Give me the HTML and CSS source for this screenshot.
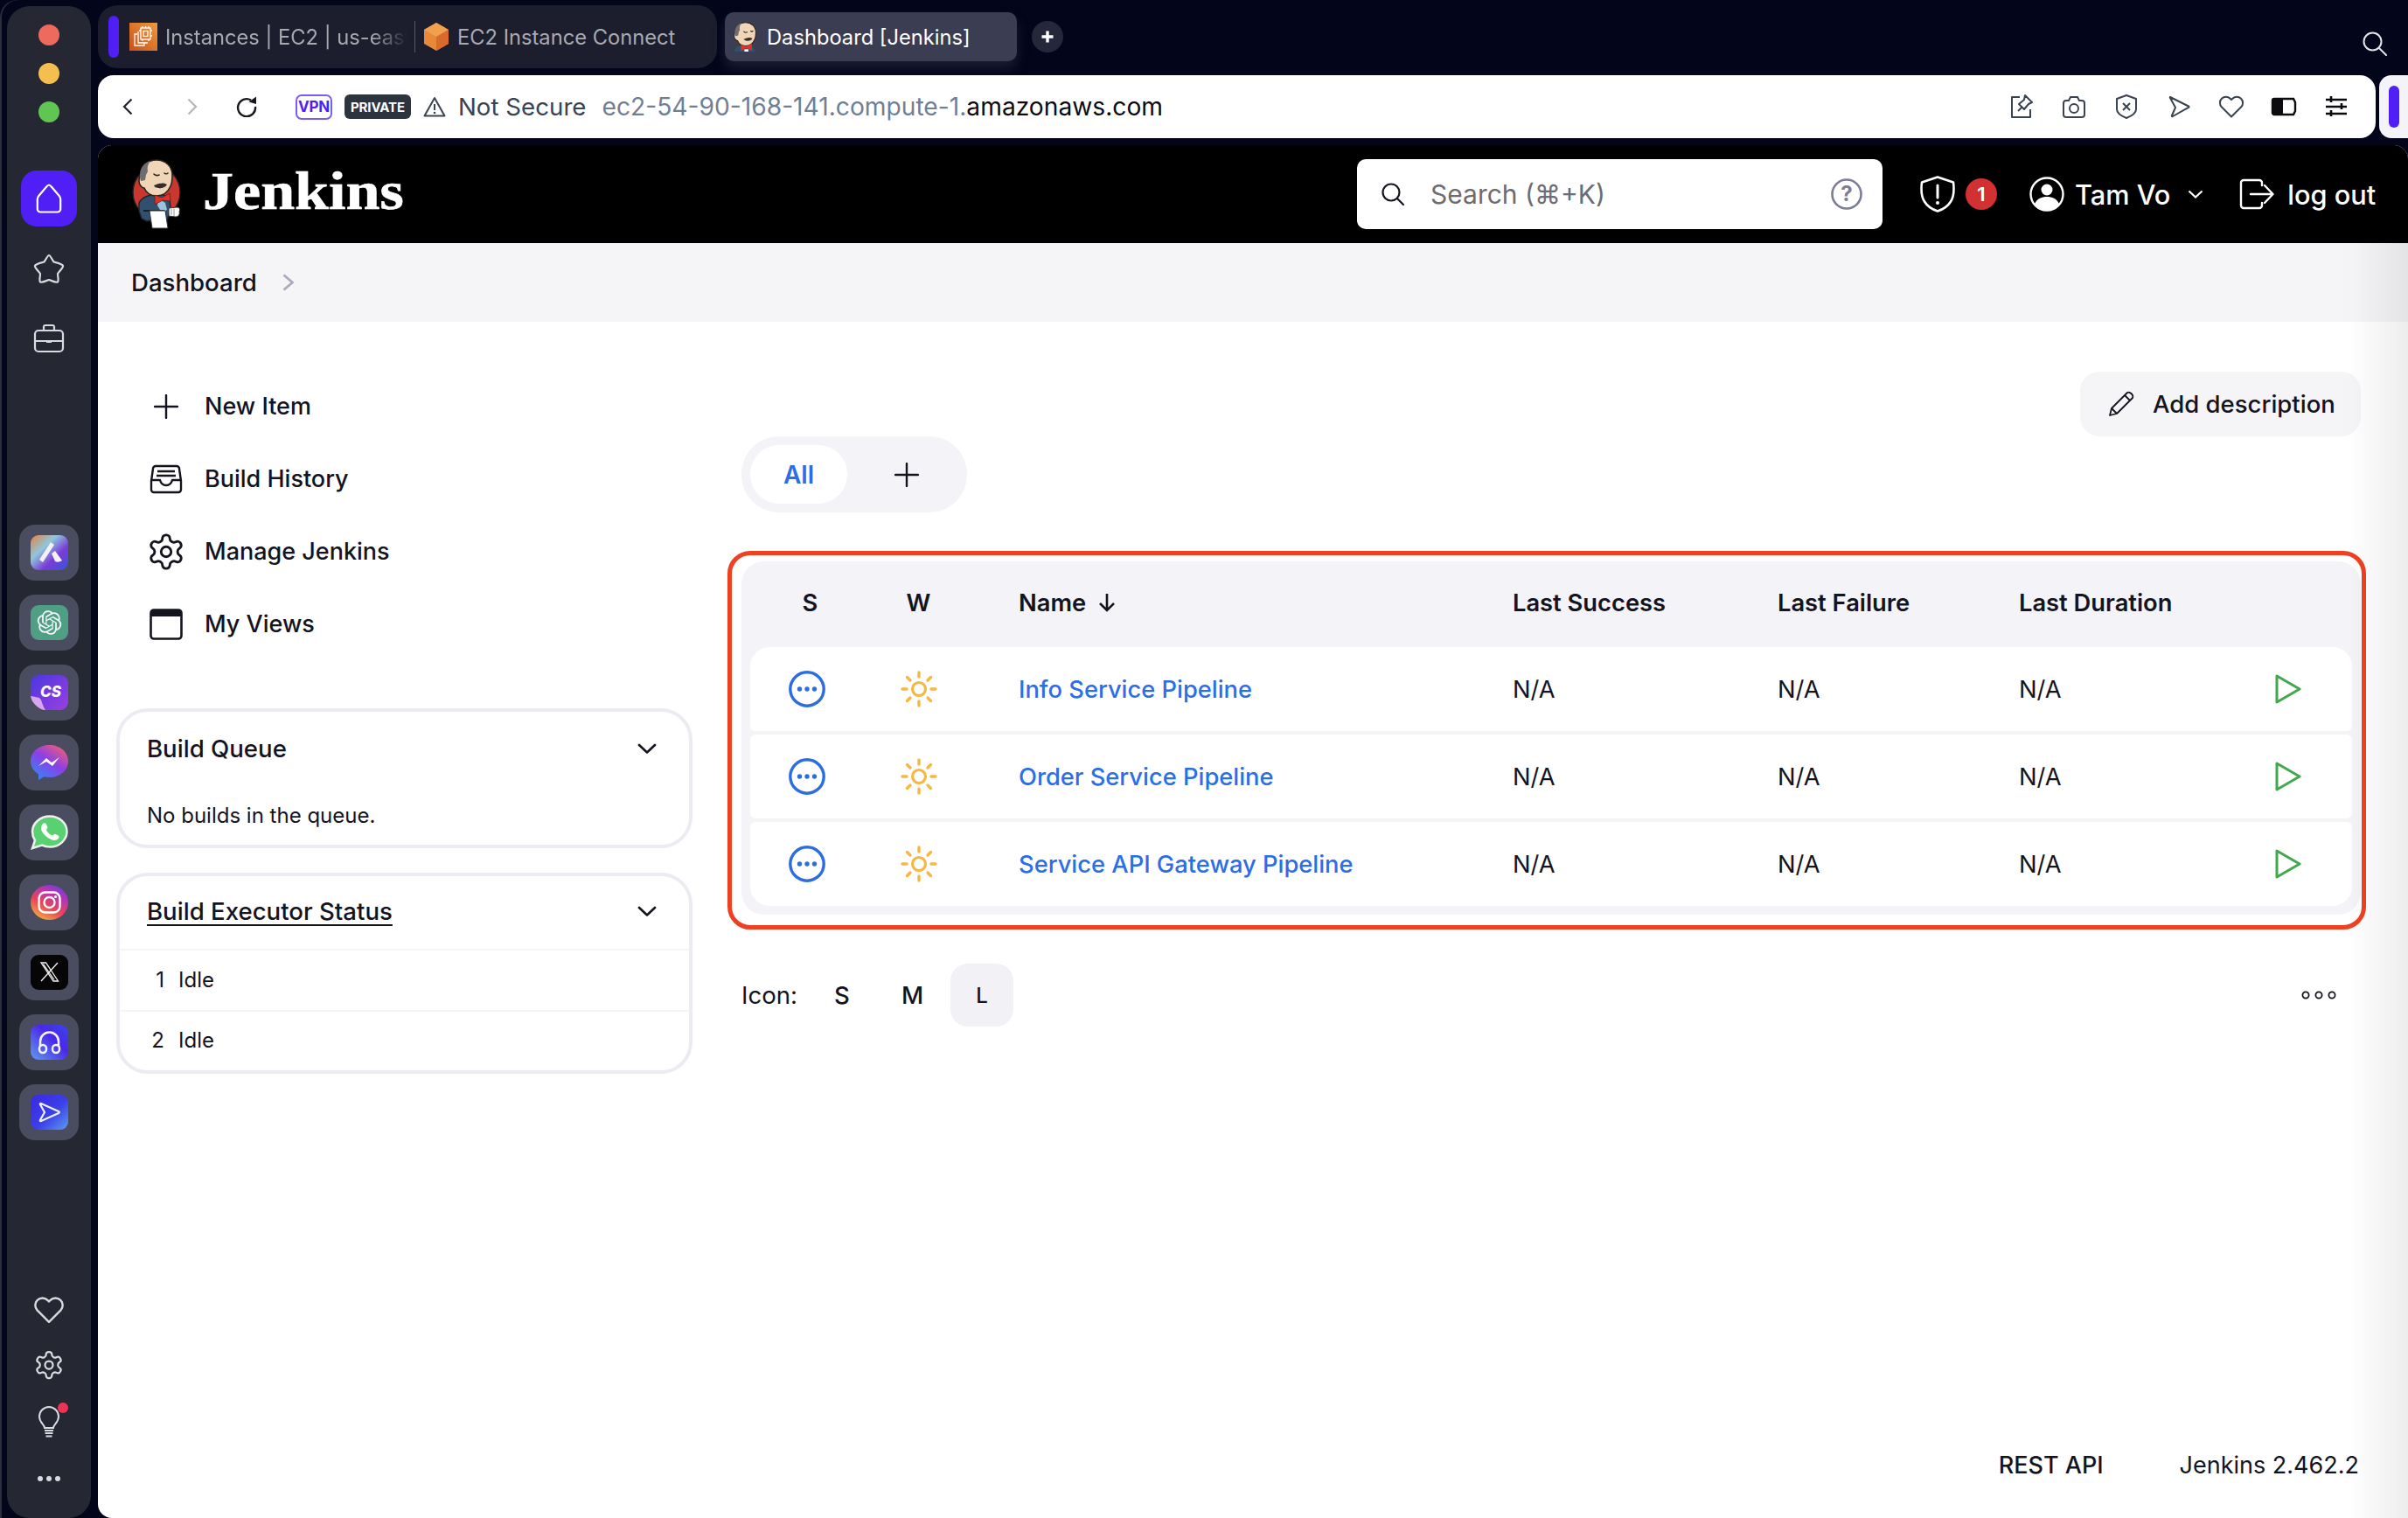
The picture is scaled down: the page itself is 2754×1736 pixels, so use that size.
FILE: index.html
```html
<!DOCTYPE html>
<html lang="en">
<head>
<meta charset="utf-8">
<title>Dashboard [Jenkins]</title>
<link rel="stylesheet" href="styles.css">
</head>
<body>
<svg class="sprite" aria-hidden="true">
  <symbol id="head" viewBox="0 0 57 80">
    <path d="M11 18C10 8 19 1 29 1c10 0 18 7 18 17 0 5 0 9-2 13-3 7-9 11-16 11-7 0-12-4-14-9-3 0-6-4-6-8 0-3 1-6 2-7z" fill="#f0d6b7" stroke="#2a2320" stroke-width="1.6"/>
    <path d="M11 25c-2-7-1-14 4-19 2-2 4-3 7-4-3 4-4 8-3 12l-2 4-1 6z" fill="#6f6d6e"/>
    <path d="M26 17c2 2 4 2 6 1M38 16c1 1 3 1 4 0" fill="none" stroke="#2a2320" stroke-width="1.6" stroke-linecap="round"/>
    <path d="M26 30c4-1 6-3 8-2 2-1 5 0 7 1-2 3-5 6-9 5-3 0-5-2-6-4z" fill="#3a2d28"/>
    <path d="M28 32c3 2 8 2 11-1-2 4-9 5-11 1z" fill="#fff"/>
  </symbol>
  <symbol id="butler" viewBox="0 0 57 80">
    <ellipse cx="29" cy="38" rx="27" ry="29" fill="#c9382f" stroke="#231f20" stroke-width="1.4"/>
    <path d="M9 50c3-6 12-10 20-10 6 0 12 2 15 6l1 10-2 8-2 6H22l-4 1-6-3-3-9z" fill="#31506d" stroke="#1d2530" stroke-width="1.4"/>
    <use href="#head" width="57" height="80"/>
    <path d="M31 45l8 5 2 8-6 3-5-8z" fill="#9cc3de"/>
    <path d="M27 41l8 3 9-5 1 9-9-1-9 5z" fill="#d9352c" stroke="#6d1b15" stroke-width=".8"/>
    <path d="M14 59h24" stroke="#111" stroke-width="1.6"/>
    <path d="M21 59h18l3 20H24z" fill="#fff" stroke="#333" stroke-width="1"/>
    <path d="M43 56l9-1c4 0 4 3 3 5 1 3-1 6-4 6l-8-1z" fill="#fff" stroke="#333" stroke-width="1"/>
    <path d="M46 57v7M49 57v8" stroke="#777" stroke-width=".8"/>
  </symbol>
  <symbol id="favicon" viewBox="5 0 46 52">
    <path d="M8 52c2-7 10-12 20-12s16 5 18 12z" fill="#31506d"/>
    <use href="#head" width="57" height="80"/>
    <path d="M21 40l9 3 10-5v12l-10-4-9 5z" fill="#d9352c"/>
    <path d="M27 48h7v4h-7z" fill="#fff"/>
  </symbol>
  <symbol id="sun" viewBox="0 0 42 42">
    <g fill="none" stroke="#f6b844" stroke-width="3.400" stroke-linecap="round">
      <circle cx="21" cy="21" r="7.500" stroke-width="3.200"/>
      <path d="M21 2v5M21 35v5M2 21h5M35 21h5M7.500 7.500l3.500 3.500M31 31l3.500 3.500M7.500 34.500l3.500-3.500M31 11l3.500-3.500"/>
    </g>
  </symbol>
  <symbol id="pending" viewBox="0 0 42 42">
    <circle cx="21" cy="21" r="19.200" fill="none" stroke="#2c6de0" stroke-width="3.400"/>
    <circle cx="12.500" cy="21" r="2.700" fill="#2c6de0"/><circle cx="21" cy="21" r="2.700" fill="#2c6de0"/><circle cx="29.500" cy="21" r="2.700" fill="#2c6de0"/>
  </symbol>
  <symbol id="play" viewBox="0 0 30 34">
    <path d="M2 2v30l26-15z" fill="none" stroke="#43a74f" stroke-width="3" stroke-linejoin="round"/>
  </symbol>
  <symbol id="chev-down" viewBox="0 0 22 12">
    <path d="M2 2l9 8.500L20 2" fill="none" stroke="#14141f" stroke-width="2.600" stroke-linecap="round" stroke-linejoin="round"/>
  </symbol>
  <symbol id="plus" viewBox="0 0 28 28">
    <path d="M14 1v26M1 14h26" fill="none" stroke="#14141f" stroke-width="2.400" stroke-linecap="round"/>
  </symbol>
  <symbol id="gear" viewBox="0 0 24 24">
    <path d="M12.220 2h-.44a2 2 0 0 0-2 2v.18a2 2 0 0 1-1 1.730l-.43.25a2 2 0 0 1-2 0l-.15-.08a2 2 0 0 0-2.730.73l-.22.38a2 2 0 0 0 .73 2.730l.15.1a2 2 0 0 1 1 1.720v.51a2 2 0 0 1-1 1.740l-.15.09a2 2 0 0 0-.73 2.730l.22.38a2 2 0 0 0 2.730.73l.15-.08a2 2 0 0 1 2 0l.43.25a2 2 0 0 1 1 1.730V20a2 2 0 0 0 2 2h.44a2 2 0 0 0 2-2v-.18a2 2 0 0 1 1-1.730l.43-.25a2 2 0 0 1 2 0l.15.08a2 2 0 0 0 2.730-.73l.22-.39a2 2 0 0 0-.73-2.730l-.15-.08a2 2 0 0 1-1-1.740v-.5a2 2 0 0 1 1-1.740l.15-.09a2 2 0 0 0 .73-2.730l-.22-.38a2 2 0 0 0-2.730-.73l-.15.08a2 2 0 0 1-2 0l-.43-.25a2 2 0 0 1-1-1.730V4a2 2 0 0 0-2-2z" fill="none" stroke="currentColor" stroke-width="1.500" stroke-linejoin="round"/>
    <circle cx="12" cy="12" r="3" fill="none" stroke="currentColor" stroke-width="1.500"/>
  </symbol>
  <symbol id="heart" viewBox="0 0 24 24">
    <path d="M20.840 4.610a5.500 5.500 0 0 0-7.780 0L12 5.670l-1.060-1.060a5.500 5.500 0 0 0-7.780 7.780l1.060 1.060L12 21.230l7.780-7.780 1.060-1.060a5.500 5.500 0 0 0 0-7.780z" fill="none" stroke="currentColor" stroke-width="1.600" stroke-linejoin="round"/>
  </symbol>
</svg>

<div class="window">
  <aside class="rail">
    <div class="lights">
      <span class="light light-red"></span>
      <span class="light light-yellow"></span>
      <span class="light light-green"></span>
    </div>
    <div class="home-tile">
      <svg class="ico-home" viewBox="0 0 30 34"><path d="M15 1.500c1 0 2 1 3 2.200l8.500 10c1 1.200 1.700 2.300 1.700 4V29a3.500 3.500 0 0 1-3.500 3.500H5.300A3.500 3.500 0 0 1 1.800 29V17.700c0-1.700.7-2.800 1.700-4l8.500-10c1-1.200 2-2.200 3-2.200z" fill="none" stroke="#fff" stroke-width="2.200"/></svg>
    </div>
    <svg class="rail-ico rail-star" viewBox="0 0 36 34"><path d="M18 2c1.500 0 3 4 5.500 7.500C27 10.500 33 11.500 34 14c.5 2-4 6-6 9 0 4 1.500 8 0 9.500-2 1-7-1.500-10-2.500-3 1-8 3.500-10 2.500-1.500-1.500 0-5.500 0-9.500-2-3-6.500-7-6-9 1-2.500 7-3.500 10.500-4.500C15 6 16.500 2 18 2z" fill="none" stroke="#d9dae0" stroke-width="2.200" stroke-linejoin="round"/></svg>
    <svg class="rail-ico rail-case" viewBox="0 0 36 34"><g fill="none" stroke="#d9dae0" stroke-width="2.200"><rect x="2" y="8" width="32" height="24" rx="4"/><path d="M12 8V4a2 2 0 0 1 2-2h8a2 2 0 0 1 2 2v4M2 20h13M21 20h13"/><path d="M15 20.500h6" stroke-width="3"/></g></svg>

    <div class="apps">
      <div class="app-tile"><svg class="app" viewBox="0 0 43 40"><defs><linearGradient id="g1" x1="0" y1="0" x2="1" y2="1"><stop offset="0" stop-color="#e8813f"/><stop offset=".35" stop-color="#8fc7dc"/><stop offset=".65" stop-color="#7a3bd8"/><stop offset="1" stop-color="#3458d8"/></linearGradient></defs><rect width="43" height="40" rx="9" fill="url(#g1)"/><path d="M10 28L23 8l4 3-13 20zM24 21l4-3 8 11c-3 2-6 2-8 1z" fill="#f4f1f4"/></svg></div>
      <div class="app-tile"><svg class="app" viewBox="0 0 43 40"><rect width="43" height="40" rx="9" fill="#4f9f84"/><g transform="translate(7.700 6.200) scale(1.150)"><path fill="#f2f7f4" d="M22.2819 9.8211a5.9847 5.9847 0 0 0-.5157-4.9108 6.0462 6.0462 0 0 0-6.5098-2.9A6.0651 6.0651 0 0 0 4.9807 4.1818a5.9847 5.9847 0 0 0-3.9977 2.9 6.0462 6.0462 0 0 0 .7427 7.0966 5.98 5.98 0 0 0 .511 4.9107 6.051 6.051 0 0 0 6.5146 2.9001A5.9847 5.9847 0 0 0 13.2599 24a6.0557 6.0557 0 0 0 5.7718-4.2058 5.9894 5.9894 0 0 0 3.9977-2.9001 6.0557 6.0557 0 0 0-.7475-7.0729zm-9.022 12.6081a4.4755 4.4755 0 0 1-2.8764-1.0408l.1419-.0804 4.7783-2.7582a.7948.7948 0 0 0 .3927-.6813v-6.7369l2.02 1.1686a.071.071 0 0 1 .038.052v5.5826a4.504 4.504 0 0 1-4.4945 4.4944zm-9.6607-4.1254a4.4708 4.4708 0 0 1-.5346-3.0137l.142.0852 4.783 2.7582a.7712.7712 0 0 0 .7806 0l5.8428-3.3685v2.3324a.0804.0804 0 0 1-.0332.0615L9.74 19.9502a4.4992 4.4992 0 0 1-6.1408-1.6464zM2.3408 7.8956a4.485 4.485 0 0 1 2.3655-1.9728V11.6a.7664.7664 0 0 0 .3879.6765l5.8144 3.3543-2.0201 1.1685a.0757.0757 0 0 1-.071 0l-4.8303-2.7865A4.504 4.504 0 0 1 2.3408 7.872zm16.5963 3.8558L13.1038 8.364 15.1192 7.2a.0757.0757 0 0 1 .071 0l4.8303 2.7913a4.4944 4.4944 0 0 1-.6765 8.1042v-5.6772a.79.79 0 0 0-.407-.667zm2.0107-3.0231l-.142-.0852-4.7735-2.7818a.7759.7759 0 0 0-.7854 0L9.409 9.2297V6.8974a.0662.0662 0 0 1 .0284-.0615l4.8303-2.7866a4.4992 4.4992 0 0 1 6.6802 4.66zM8.3065 12.863l-2.02-1.1638a.0804.0804 0 0 1-.038-.0567V6.0742a4.4992 4.4992 0 0 1 7.3757-3.4537l-.142.0805L8.704 5.459a.7948.7948 0 0 0-.3927.6813zm1.0976-2.3654l2.602-1.4998 2.6069 1.4998v2.9994l-2.5974 1.4997-2.6067-1.4997Z"/></g></svg></div>
      <div class="app-tile"><svg class="app" viewBox="0 0 43 40"><defs><linearGradient id="g3" x1="0" y1="0" x2="1" y2="1"><stop offset="0" stop-color="#4a37e0"/><stop offset="1" stop-color="#9a3fe0"/></linearGradient></defs><path d="M9 0h25a9 9 0 0 1 9 9v22a9 9 0 0 1-9 9H15L0 26V9a9 9 0 0 1 9-9z" fill="url(#g3)"/><path d="M0 24c4 1 9 1 11 3s2 7 6 13c-7 0-16-8-17-16z" fill="#d7a6ec"/><text class="app-cs" x="23" y="25">CS</text></svg></div>
      <div class="app-tile"><svg class="app" viewBox="0 0 43 40"><defs><linearGradient id="g4" x1=".8" y1="0" x2=".1" y2="1"><stop offset="0" stop-color="#ee5d7a"/><stop offset=".45" stop-color="#8a3fe8"/><stop offset="1" stop-color="#2a8ff5"/></linearGradient></defs><path d="M21.500 0C33.500 0 43 8 43 18.500S33.500 37 21.500 37c-2 0-4-.2-6-.7L9 40v-6.500C3.500 30 0 24.700 0 18.500 0 8 9.500 0 21.500 0z" fill="url(#g4)"/><path d="M9 24l9-9 6 5 9-6-8 10-7-5z" fill="#fff"/></svg></div>
      <div class="app-tile"><svg class="app" viewBox="0 0 43 40"><path d="M22 1.500C33 1.500 41.500 9.500 41.500 19S33 36.500 22 36.500c-3.500 0-6.500-.8-9-2L2 38l3-9C3 26 2 22.500 2 19 2 9.500 11 1.500 22 1.500z" fill="#59d170" stroke="#eef0ee" stroke-width="2.500"/><path d="M14 10c1-1 3-1 3.500 0l2 4c.3.800-1.500 2-1.500 3 1 3 4 5.500 7 6.500 1 0 2-2 3-1.700l4 2c1 .7.500 2.500-.5 3.500-2 2-5 2-8 .7-5-2-9-6-11-10-1-3-.5-6 1.500-8z" fill="#fff"/></svg></div>
      <div class="app-tile"><svg class="app" viewBox="0 0 43 40"><defs><linearGradient id="g6" x1=".2" y1="1" x2=".8" y2="0"><stop offset="0" stop-color="#f4b13f"/><stop offset=".4" stop-color="#e8455a"/><stop offset=".75" stop-color="#b235b8"/><stop offset="1" stop-color="#6a3ee0"/></linearGradient></defs><ellipse cx="21.500" cy="20" rx="21.500" ry="20" fill="url(#g6)"/><rect x="9.500" y="8.500" width="24" height="23" rx="7" fill="none" stroke="#fff" stroke-width="2.400"/><circle cx="21.500" cy="20" r="6" fill="none" stroke="#fff" stroke-width="2.400"/><circle cx="28.500" cy="13.500" r="1.600" fill="#fff"/></svg></div>
      <div class="app-tile"><svg class="app" viewBox="0 0 43 40"><rect width="43" height="40" rx="9" fill="#060606"/><path d="M12 9h5.500l14 21H26zM31 9L12 30M14.500 10.500L27 28.500" fill="none" stroke="#f2f2f2" stroke-width="1.300"/></svg></div>
      <div class="app-tile"><svg class="app" viewBox="0 0 43 40"><defs><linearGradient id="g8" x1="0" y1="1" x2="1" y2="0"><stop offset="0" stop-color="#5f9cf0"/><stop offset=".6" stop-color="#4a28e8"/><stop offset="1" stop-color="#3a45e8"/></linearGradient></defs><rect width="43" height="40" rx="9" fill="url(#g8)"/><g fill="none" stroke="#f2f2fa" stroke-width="2.500"><path d="M11 25v-6a10.500 10.500 0 0 1 21 0v6"/><rect x="10" y="23" width="8" height="9" rx="4"/><rect x="25" y="23" width="8" height="9" rx="4"/></g></svg></div>
      <div class="app-tile"><svg class="app" viewBox="0 0 43 40"><defs><linearGradient id="g9" x1="0" y1="0" x2="1" y2="1"><stop offset="0" stop-color="#3a28e0"/><stop offset=".55" stop-color="#3c40e8"/><stop offset="1" stop-color="#5a9cf0"/></linearGradient></defs><rect width="43" height="40" rx="9" fill="url(#g9)"/><path d="M12 10l20 9c1 .5 1 1.500 0 2l-20 9c-1 .4-1.500-.3-1-1.200L16 20l-5-8.800c-.5-.9 0-1.600 1-1.200z" fill="none" stroke="#f0f0fa" stroke-width="2.200" stroke-linejoin="round"/></svg></div>
    </div>

    <div class="rail-bottom">
      <svg class="rail-small"><use href="#heart"/></svg>
      <svg class="rail-small"><use href="#gear"/></svg>
      <div class="bulb-wrap">
        <svg class="bulb" viewBox="0 0 26 38"><g fill="none" stroke="#d9dae0" stroke-width="2"><path d="M8 26c0-4-6-6-6-13a11 11 0 0 1 22 0c0 7-6 9-6 13z"/><path d="M8 29h10M8.500 32h9M9.500 35.500h7" stroke-width="2"/></g></svg>
        <span class="bulb-dot"></span>
      </div>
      <div class="rail-dots"><span></span><span></span><span></span></div>
    </div>
  </aside>

  <div class="browser">
    <div class="tabstrip">
      <div class="tabgroup">
        <span class="group-bar"></span>
        <svg class="tab-ec2" viewBox="0 0 32 32"><defs><linearGradient id="ec2g" x1="0" y1="1" x2="1" y2="0"><stop offset="0" stop-color="#c9511c"/><stop offset="1" stop-color="#f09a3a"/></linearGradient></defs><rect width="32" height="32" fill="url(#ec2g)"/><g fill="none" stroke="#fff" stroke-width="1.300"><rect x="13" y="6" width="11" height="13"/><rect x="16" y="9.500" width="5" height="6"/><path d="M9 13H6v13h11v-3M10 10v13h11M15 4v2M18.500 4v2M22 4v2M15 19v2M22 19v2M11 9h2M24 9h2M24 15h2"/></g></svg>
        <span class="tab-title tab-fade">Instances | EC2 | us-east</span>
        <span class="tab-sep"></span>
        <svg class="tab-cube" viewBox="0 0 28 32"><path d="M14 0l14 8v16l-14 8-14-8V8z" fill="#e8893a"/><path d="M14 0l14 8-14 8L0 8z" fill="#f0a04e"/><path d="M14 16l14-8v16l-14 8z" fill="#d96a2c"/></svg>
        <span class="tab-title">EC2 Instance Connect</span>
      </div>
      <div class="tab-active">
        <svg class="tab-fav"><use href="#favicon"/></svg>
        <span class="tab-title-active">Dashboard [Jenkins]</span>
      </div>
      <div class="tab-new"><svg class="tab-new-ico" viewBox="0 0 16 16"><path d="M8 1.500v13M1.500 8h13" stroke="#fff" stroke-width="3.400"/></svg></div>
      <svg class="strip-search" viewBox="0 0 28 28"><g fill="none" stroke="#e4e4e8" stroke-width="2"><circle cx="11.500" cy="11.500" r="10"/><path d="M19 19l8 8" stroke-linecap="round"/></g></svg>
    </div>

    <div class="addressrow">
      <div class="addressbar">
        <svg class="nav-back" viewBox="0 0 12 20"><path d="M10.500 1.500L2 10l8.500 8.500" fill="none" stroke="#20242c" stroke-width="2.200"/></svg>
        <svg class="nav-forward" viewBox="0 0 12 20"><path d="M1.500 1.500L10 10l-8.500 8.500" fill="none" stroke="#b4b6bb" stroke-width="2.200"/></svg>
        <svg class="nav-reload" viewBox="0 0 24 24"><path d="M17 4.500A10 10 0 1 0 22 12" fill="none" stroke="#16181d" stroke-width="2.400"/><path d="M14.500 6.500L23 .5v8.500z" fill="#16181d"/></svg>
        <span class="badge-vpn">VPN</span>
        <span class="badge-private">PRIVATE</span>
        <svg class="warn" viewBox="0 0 26 24"><path d="M13 2L1.500 22.500h23z" fill="none" stroke="#3a4350" stroke-width="2" stroke-linejoin="round"/><path d="M13 9v7" stroke="#3a4350" stroke-width="2"/><circle cx="13" cy="19" r="1.300" fill="#3a4350"/></svg>
        <span class="not-secure">Not Secure</span>
        <span class="url"><span class="url-sub">ec2-54-90-168-141.compute-1.</span><span class="url-host">amazonaws.com</span></span>
        <div class="addr-tools">
          <svg class="addr-ico" viewBox="0 0 30 30"><g fill="none" stroke="#3a4350" stroke-width="2" stroke-linejoin="round"><path d="M13 4H4v23h21v-9"/><path d="M19 2l8 8-4 2-5 6-3-3-2-2-1-1 6-5z"/><path d="M11 20l5-5"/></g></svg>
          <svg class="addr-ico" viewBox="0 0 30 30"><g fill="none" stroke="#3a4350" stroke-width="2"><path d="M3 11a3 3 0 0 1 3-3h3l2-4h8l2 4h3a3 3 0 0 1 3 3v13a3 3 0 0 1-3 3H6a3 3 0 0 1-3-3z"/><circle cx="15" cy="17" r="5"/></g></svg>
          <svg class="addr-ico" viewBox="0 0 30 30"><g fill="none" stroke="#3a4350" stroke-width="2"><path d="M15 2l11 4v12c0 5-6 8-11 10-5-2-11-5-11-10V6z" stroke-linejoin="round"/><path d="M11 11l8 8M19 11l-8 8"/></g></svg>
          <svg class="addr-ico" viewBox="0 0 30 30"><path d="M5 4l21 10.500c.8.400.8 1 0 1.400L8 26c-1 .5-1.600 0-1-1l4-9-6-11c-.4-.8 0-1.300 0-1z" fill="none" stroke="#3a4350" stroke-width="2" stroke-linejoin="round"/></svg>
          <svg class="addr-ico addr-heart"><use href="#heart"/></svg>
          <svg class="addr-ico" viewBox="0 0 30 30"><path d="M4 6h22l2 4v10l-2 4H4a2 2 0 0 1-2-2V8a2 2 0 0 1 2-2z" fill="none" stroke="#0c0c10" stroke-width="2.400"/><path d="M2 8a2 2 0 0 1 2-2h10v18H4a2 2 0 0 1-2-2z" fill="#0c0c10"/></svg>
          <svg class="addr-ico" viewBox="0 0 30 30"><g fill="none" stroke="#0c0c10" stroke-width="2.400"><path d="M3 7h24M3 15h24M3 23h24"/><path d="M9 3v7M21 11v7M9 19v7" stroke-width="2.600"/></g></svg>
        </div>
      </div>
      <div class="sidepeek"><span class="sidepeek-bar"></span></div>
    </div>

    <div class="page">
      <header class="jk-header">
        <svg class="jk-logo"><use href="#butler"/></svg>
        <span class="jk-word">Jenkins</span>
        <div class="jk-search">
          <svg class="jk-search-ico" viewBox="0 0 28 28"><g fill="none" stroke="#14141f" stroke-width="2.200"><circle cx="12" cy="12" r="9.500"/><path d="M19 19l7 7" stroke-linecap="round"/></g></svg>
          <span class="jk-search-text">Search (⌘+K)</span>
          <svg class="jk-help" viewBox="0 0 36 36"><circle cx="18" cy="18" r="16.500" fill="none" stroke="#7d7d94" stroke-width="2.600"/><text class="jk-help-q" x="18" y="26">?</text></svg>
        </div>
        <svg class="jk-shield" viewBox="0 0 42 42"><path d="M21 1.500l18 6c1 8 1 16-3 22-3 5-9 9-15 11-6-2-12-6-15-11C2 23.500 2 15.500 3 7.500z" fill="none" stroke="#fff" stroke-width="2.600" stroke-linejoin="round"/><path d="M21 11v14" stroke="#fff" stroke-width="3" stroke-linecap="round"/><circle cx="21" cy="31" r="2" fill="#fff"/></svg>
        <span class="jk-count">1</span>
        <svg class="jk-user" viewBox="0 0 40 40"><circle cx="20" cy="20" r="18.500" fill="none" stroke="#fff" stroke-width="2.400"/><circle cx="20" cy="15" r="6.500" fill="#fff"/><path d="M6 31c3-6 8-8 14-8s11 2 14 8c-3 4-8 7-14 7s-11-3-14-7z" fill="#fff"/></svg>
        <span class="jk-name">Tam Vo</span>
        <svg class="jk-caret" viewBox="0 0 18 10"><path d="M1.500 1.500L9 8.500l7.500-7" fill="none" stroke="#fff" stroke-width="2.200"/></svg>
        <svg class="jk-logout" viewBox="0 0 40 36"><g fill="none" stroke="#fff" stroke-width="2.400" stroke-linejoin="round" stroke-linecap="round"><path d="M26 8V5a3 3 0 0 0-3-3H5a3 3 0 0 0-3 3v26a3 3 0 0 0 3 3h18a3 3 0 0 0 3-3v-3"/><path d="M13 18h25M29 8l9.500 10L29 28"/></g></svg>
        <span class="jk-name jk-name-out">log out</span>
      </header>

      <nav class="crumbs">
        <span class="crumb">Dashboard</span>
        <svg class="crumb-sep" viewBox="0 0 13 20"><path d="M1.500 1.500L11.500 10l-10 8.500" fill="none" stroke="#aaa9bd" stroke-width="2.800"/></svg>
      </nav>

      <div class="content">
        <aside class="side">
          <ul class="tasks">
            <li class="task"><span class="task-ico"><svg class="ico-plus"><use href="#plus"/></svg></span>New Item</li>
            <li class="task"><span class="task-ico"><svg class="ico-38" viewBox="0 0 38 34"><g fill="none" stroke="#14141f" stroke-width="2.400" stroke-linejoin="round"><path d="M7 2h24a3 3 0 0 1 3 3l2 14v10a3 3 0 0 1-3 3H5a3 3 0 0 1-3-3V19L4 5a3 3 0 0 1 3-3z"/><path d="M2 18h10c1 4 4 6 7 6s6-2 7-6h10"/><path d="M9 8h20M8 13h22"/></g></svg></span>Build History</li>
            <li class="task"><span class="task-ico"><svg class="ico-gear"><use href="#gear"/></svg></span>Manage Jenkins</li>
            <li class="task"><span class="task-ico"><svg class="ico-38" viewBox="0 0 38 36"><rect x="1.500" y="1.500" width="35" height="33" rx="3.500" fill="none" stroke="#14141f" stroke-width="2.600"/><path d="M1.500 5a3.500 3.500 0 0 1 3.500-3.500h28A3.500 3.500 0 0 1 36.500 5v4h-35z" fill="#14141f"/></svg></span>My Views</li>
          </ul>

          <section class="panel panel-queue">
            <div class="panel-head"><span class="panel-title">Build Queue</span><svg class="panel-chev"><use href="#chev-down"/></svg></div>
            <p class="queue-empty">No builds in the queue.</p>
          </section>

          <section class="panel">
            <div class="panel-head panel-head-exec"><span class="panel-title panel-title-link">Build Executor Status</span><svg class="panel-chev"><use href="#chev-down"/></svg></div>
            <div class="exec-row"><span class="exec-num">1</span><span>Idle</span></div>
            <div class="exec-row"><span class="exec-num">2</span><span>Idle</span></div>
          </section>
        </aside>

        <main class="main">
          <div class="actions">
            <button class="add-desc" type="button">
              <svg class="pencil" viewBox="0 0 30 30"><g fill="none" stroke="#14141f" stroke-width="1.800" stroke-linejoin="round"><path d="M2 28l2-8L22 2c2-1 5 1 6 3 .5 1 .5 2 0 3L10 26z"/><path d="M19 5l6 6M4 20l6 6"/></g></svg>
              Add description
            </button>
          </div>
          <div class="viewtabs">
            <span class="viewtab-on">All</span>
            <svg class="viewtab-plus"><use href="#plus"/></svg>
          </div>

          <div class="highlight">
            <div class="jobs">
              <div class="jobs-row jobs-head">
                <span class="col-s">S</span>
                <span class="col-w">W</span>
                <span class="col-name">Name <svg class="sort-arrow" viewBox="0 0 20 22"><path d="M10 1v19M2 12l8 8 8-8" fill="none" stroke="#14141f" stroke-width="2.600"/></svg></span>
                <span>Last Success</span>
                <span>Last Failure</span>
                <span>Last Duration</span>
                <span></span>
              </div>
              <div class="jobs-row job">
                <span class="cell-ico"><svg class="st-ico"><use href="#pending"/></svg></span>
                <span class="cell-ico"><svg class="st-ico"><use href="#sun"/></svg></span>
                <a class="col-name job-link">Info Service Pipeline</a>
                <span>N/A</span><span>N/A</span><span>N/A</span>
                <svg class="play"><use href="#play"/></svg>
              </div>
              <div class="jobs-row job">
                <span class="cell-ico"><svg class="st-ico"><use href="#pending"/></svg></span>
                <span class="cell-ico"><svg class="st-ico"><use href="#sun"/></svg></span>
                <a class="col-name job-link">Order Service Pipeline</a>
                <span>N/A</span><span>N/A</span><span>N/A</span>
                <svg class="play"><use href="#play"/></svg>
              </div>
              <div class="jobs-row job">
                <span class="cell-ico"><svg class="st-ico"><use href="#pending"/></svg></span>
                <span class="cell-ico"><svg class="st-ico"><use href="#sun"/></svg></span>
                <a class="col-name job-link">Service API Gateway Pipeline</a>
                <span>N/A</span><span>N/A</span><span>N/A</span>
                <svg class="play"><use href="#play"/></svg>
              </div>
            </div>
          </div>

          <div class="legend">
            <span class="legend-label">Icon:</span>
            <span class="size size-s">S</span>
            <span class="size size-m">M</span>
            <span class="size-on">L</span>
            <svg class="legend-more" viewBox="0 0 40 10"><g fill="none" stroke="#14141f" stroke-width="1.800"><circle cx="5" cy="5" r="3.600"/><circle cx="20" cy="5" r="3.600"/><circle cx="35" cy="5" r="3.600"/></g></svg>
          </div>
        </main>
      </div>

      <footer class="foot">
        <span class="foot-link">REST API</span>
        <span class="foot-ver">Jenkins 2.462.2</span>
      </footer>
      <div class="edge-shade"></div>
    </div>
  </div>
</div>
</body>
</html>
```

FILE: styles.css
```css
* { box-sizing: border-box; }
html, body { margin: 0; padding: 0; }
body {
  width: 2754px;
  height: 1736px;
  overflow: hidden;
  background: #03061a;
  font-family: Inter, "Noto Sans", sans-serif;
  color: #14141f;
}
.sprite { position: absolute; width: 0; height: 0; }

.window {
  display: flex;
  width: 2754px;
  height: 1736px;
  border-radius: 20px 0 0 0;
  box-shadow: inset 2px 0 0 #2a2c3c;
}

/* left rail */
.rail {
  width: 96px;
  margin: 7px 0 0 8px;
  background: #252733;
  border-radius: 26px;
  display: flex;
  flex-direction: column;
  align-items: center;
  color: #d9dae0;
}
.lights { display: flex; flex-direction: column; gap: 20px; padding-top: 21px; }
.light { width: 24px; height: 24px; border-radius: 50%; display: block; }
.light-red { background: #ee6a5f; }
.light-yellow { background: #f5bf4f; }
.light-green { background: #61c554; }
.home-tile {
  margin-top: 55px;
  width: 64px;
  height: 64px;
  border-radius: 18px;
  background: #4f1ff5;
  display: flex;
  align-items: center;
  justify-content: center;
}
.ico-home { width: 30px; height: 34px; }
.rail-ico { width: 36px; height: 34px; display: block; }
.rail-star { margin-top: 31px; }
.rail-case { margin-top: 46px; }
.apps { margin-top: 196px; display: flex; flex-direction: column; gap: 16px; }
.app-tile {
  width: 68px;
  height: 64px;
  background: #4a4c60;
  border-radius: 18px;
  display: flex;
  align-items: center;
  justify-content: center;
}
.app { width: 43px; height: 40px; display: block; }
.app-cs { font: 800 17px Inter, sans-serif; fill: #fff; text-anchor: middle; font-style: italic; }
.rail-bottom {
  margin-top: auto;
  padding-bottom: 42px;
  display: flex;
  flex-direction: column;
  align-items: center;
}
.rail-small { width: 36px; height: 36px; display: block; margin-bottom: 27px; }
.bulb-wrap { position: relative; width: 26px; height: 38px; margin-top: 1px; }
.bulb { width: 26px; height: 38px; display: block; }
.bulb-dot {
  position: absolute;
  left: 23px;
  top: -3px;
  width: 12px;
  height: 12px;
  border-radius: 50%;
  background: #ef3354;
}
.rail-dots { display: flex; gap: 4px; margin-top: 43px; }
.rail-dots span { width: 6px; height: 6px; border-radius: 50%; background: #d9dae0; display: block; }

/* browser chrome */
.browser { flex: 1; min-width: 0; margin-left: 8px; display: flex; flex-direction: column; }
.tabstrip { height: 86px; padding-top: 6px; display: flex; align-items: flex-start; }
.tabgroup {
  width: 708px;
  height: 72px;
  background: #1c1e2d;
  border-radius: 22px;
  display: flex;
  align-items: center;
  padding-left: 12px;
}
.group-bar { width: 12px; height: 48px; border-radius: 6px; background: #4f1ff5; display: block; }
.tab-ec2 { width: 32px; height: 32px; margin-left: 12px; }
.tab-title { font-size: 23.7px; color: #a9aab0; white-space: nowrap; margin-left: 9px; }
.tab-fade {
  width: 277px;
  -webkit-mask-image: linear-gradient(90deg, #000 85%, transparent 100%);
  mask-image: linear-gradient(90deg, #000 85%, transparent 100%);
}
.tab-sep { width: 1px; height: 36px; background: #55576a; margin-left: 8px; }
.tab-cube { width: 28px; height: 32px; margin-left: 10px; }
.tab-cube + .tab-title { margin-left: 10px; }
.tab-active {
  width: 334px;
  height: 56px;
  margin: 8px 0 0 9px;
  background: #3b3d52;
  border-radius: 10px;
  box-shadow: 0 8px 14px rgba(70, 72, 100, .35);
  display: flex;
  align-items: center;
  padding-left: 8px;
}
.tab-fav { width: 30px; height: 34px; }
.tab-title-active { font-size: 23.7px; color: #fff; margin-left: 10px; white-space: nowrap; }
.tab-new {
  width: 36px;
  height: 36px;
  margin: 18px 0 0 17px;
  border-radius: 50%;
  background: #25273a;
  display: flex;
  align-items: center;
  justify-content: center;
}
.tab-new-ico { width: 16px; height: 16px; }
.strip-search { width: 28px; height: 28px; margin: 30px 24px 0 auto; }

.addressrow { display: flex; height: 72px; gap: 4px; }
.addressbar {
  width: 2605px;
  background: #fff;
  border-radius: 18px;
  display: flex;
  align-items: center;
  padding-left: 28px;
}
.nav-back { width: 12px; height: 20px; }
.nav-forward { width: 12px; height: 20px; margin-left: 62px; }
.nav-reload { width: 24px; height: 24px; margin-left: 44px; }
.badge-vpn {
  margin-left: 44px;
  width: 42px;
  height: 29px;
  border: 2px solid #7a5cf7;
  border-radius: 7px;
  color: #4f1ff5;
  font-size: 17px;
  font-weight: 700;
  display: flex;
  align-items: center;
  justify-content: center;
  letter-spacing: -.3px;
}
.badge-private {
  margin-left: 14px;
  width: 76px;
  height: 28px;
  background: #2c3440;
  color: #fff;
  border-radius: 6px;
  font-size: 15px;
  font-weight: 700;
  display: flex;
  align-items: center;
  justify-content: center;
  letter-spacing: -.1px;
}
.warn { width: 26px; height: 24px; margin-left: 14px; }
.not-secure { font-size: 27.7px; color: #3a4350; margin-left: 14px; white-space: nowrap; }
.url { font-size: 28.2px; margin-left: 18px; white-space: nowrap; }
.url-sub { color: #6f8094; }
.url-host { color: #0c0c10; }
.addr-tools { margin-left: auto; padding-right: 30px; display: flex; gap: 30px; align-items: center; }
.addr-ico { width: 30px; height: 30px; display: block; }
.addr-heart { color: #3a4350; }
.sidepeek {
  flex: 1;
  background: #f4f4f8;
  border-radius: 14px 0 0 14px;
  display: flex;
  align-items: center;
  padding-left: 11px;
}
.sidepeek-bar { width: 12px; height: 48px; border-radius: 6px; background: #4f1ff5; display: block; }

/* page */
.page {
  position: relative;
  flex: 1;
  min-height: 0;
  margin-top: 8px;
  background: #fff;
  border-radius: 16px 16px 0 16px;
  overflow: hidden;
  display: flex;
  flex-direction: column;
}
.jk-header {
  height: 112px;
  flex: none;
  background: #000;
  display: flex;
  align-items: center;
  padding-left: 38px;
  color: #fff;
}
.jk-logo { width: 57px; height: 80px; }
.jk-word {
  margin-left: 25px;
  width: 203px;
  font-family: "Liberation Serif", serif;
  font-weight: 700;
  font-size: 62px;
  line-height: 1;
  color: #fff;
  padding-bottom: 9px;
  -webkit-text-stroke: .7px #fff;
  transform: scaleX(1.13);
  transform-origin: left center;
}
.jk-search {
  margin-left: 1117px;
  width: 601px;
  height: 80px;
  background: #fff;
  border-radius: 10px;
  display: flex;
  align-items: center;
  padding-left: 27px;
}
.jk-search-ico { width: 28px; height: 28px; }
.jk-search-text { font-size: 30px; color: #6c6c72; margin-left: 29px; white-space: nowrap; }
.jk-help { width: 36px; height: 36px; margin-left: auto; margin-right: 23px; }
.jk-help-q { font: 700 24px Inter, sans-serif; fill: #7d7d94; text-anchor: middle; }
.jk-shield { width: 42px; height: 42px; margin-left: 42px; }
.jk-count {
  width: 36px;
  height: 36px;
  margin-left: 11px;
  border-radius: 50%;
  background: #d33131;
  color: #fff;
  font-size: 22px;
  font-weight: 600;
  display: flex;
  align-items: center;
  justify-content: center;
}
.jk-user { width: 40px; height: 40px; margin-left: 37px; }
.jk-name { font-size: 30.7px; font-weight: 500; margin-left: 12px; white-space: nowrap; }
.jk-name-out { margin-left: 15px; }
.jk-caret { width: 18px; height: 10px; margin-left: 20px; }
.jk-logout { width: 40px; height: 36px; margin-left: 41px; }

.crumbs {
  height: 90px;
  flex: none;
  background: #f5f5f8;
  display: flex;
  align-items: center;
  padding-left: 38px;
}
.crumb { font-size: 27.6px; font-weight: 500; }
.crumb-sep { width: 13px; height: 20px; margin-left: 29px; }

.content { flex: 1; min-height: 0; display: flex; align-items: flex-start; padding-left: 21px; }
.side { width: 659px; flex: none; padding-top: 55px; }
.tasks { list-style: none; margin: 0; padding: 0; }
.task {
  height: 83px;
  display: flex;
  align-items: center;
  font-size: 27px;
  font-weight: 500;
}
.task-ico { width: 101px; padding-left: 38px; display: flex; justify-content: flex-start; align-items: center; flex: none; }
.ico-plus { width: 28px; height: 28px; margin-left: 5px; }
.ico-38 { width: 38px; height: 36px; }
.ico-gear { width: 46px; height: 46px; margin-left: -4px; }

.panel {
  border: 4px solid #ebebf2;
  border-radius: 36px;
  margin-top: 55px;
}
.panel + .panel { margin-top: 28px; }
.panel-queue { height: 160px; }
.panel-head {
  height: 84px;
  display: flex;
  align-items: center;
  justify-content: space-between;
  padding: 0 37px 0 31px;
}
.panel-head-exec { height: 83px; padding-bottom: 4px; }
.panel-title { font-size: 27.6px; font-weight: 500; }
.panel-title-link { text-decoration: underline; text-underline-offset: 5px; text-decoration-thickness: 2px; }
.panel-chev { width: 22px; height: 12px; }
.queue-empty { margin: 0; padding: 18px 31px 0; font-size: 24px; line-height: 34px; }
.exec-row {
  height: 70px;
  border-top: 2px solid #f3f3f8;
  padding-bottom: 2px;
  display: flex;
  align-items: center;
  font-size: 24px;
}
.exec-row:last-child { height: 69px; }
.exec-num { width: 51px; text-align: right; margin-right: 16px; }

.main { flex: 1; min-width: 0; margin-left: 56px; padding: 57px 54px 0 0; display: flex; flex-direction: column; }
.actions { display: flex; justify-content: flex-end; height: 74px; }
.add-desc {
  width: 321px;
  height: 74px;
  border: 0;
  border-radius: 22px;
  background: #f5f5f8;
  font: 500 27.5px Inter, sans-serif;
  color: #14141f;
  display: flex;
  align-items: center;
  padding: 0 0 0 32px;
  gap: 21px;
}
.pencil { width: 30px; height: 30px; }

.viewtabs {
  width: 258px;
  height: 87px;
  background: #f3f3f8;
  border-radius: 43px;
  display: flex;
  align-items: center;
  padding-left: 10px;
}
.viewtab-on {
  width: 111px;
  height: 67px;
  border-radius: 33px;
  background: #fff;
  color: #2b6ee6;
  font-size: 28px;
  font-weight: 600;
  display: flex;
  align-items: center;
  justify-content: center;
}
.viewtab-plus { width: 28px; height: 28px; margin-left: 54px; }

.highlight {
  margin: 44px -6px 0 -16px;
  border: 5px solid #ee4122;
  border-radius: 26px;
  padding: 7px 1px 12px 11px;
}
.jobs {
  background: #f3f3f8;
  border-radius: 26px;
  padding: 0 10px 10px;
  display: flex;
  flex-direction: column;
  gap: 4px;
}
.jobs-row {
  display: grid;
  grid-template-columns: 129px 127px 616px 303px 276px 293px 88px;
  align-items: center;
  font-size: 27.3px;
}
.jobs-head { height: 94px; font-weight: 600; }
.col-s { text-align: center; padding-left: 8px; }
.col-w { text-align: center; }
.col-name { padding-left: 51px; display: flex; align-items: center; gap: 14px; }
.sort-arrow { width: 20px; height: 22px; }
.job { height: 96px; background: #fff; border-radius: 6px; }
.jobs-head + .job { border-radius: 22px 22px 6px 6px; }
.job:last-child { border-radius: 6px 6px 22px 22px; }
.cell-ico { display: flex; justify-content: center; }
.st-ico { width: 42px; height: 42px; display: block; }
.job-link { color: #2b6ee6; font-weight: 500; }
.play { width: 30px; height: 34px; display: block; }

.legend { display: flex; align-items: center; margin-top: 39px; font-size: 27.6px; }
.legend-label { width: 106px; flex: none; }
.size { font-weight: 500; }
.size-s { width: 77px; }
.size-m { width: 56px; }
.size-on {
  width: 72px;
  height: 72px;
  border-radius: 20px;
  background: #f1f1f6;
  display: flex;
  align-items: center;
  justify-content: center;
  font-size: 24px;
  font-weight: 500;
}
.legend-more { width: 40px; height: 10px; margin-left: auto; margin-right: 28px; }

.foot {
  flex: none;
  height: 122px;
  display: flex;
  align-items: center;
  justify-content: flex-end;
  padding-right: 56px;
  gap: 87px;
  font-size: 27px;
}
.foot-link { font-weight: 500; }
.edge-shade {
  position: absolute;
  top: 0;
  right: 0;
  bottom: 0;
  width: 70px;
  background: linear-gradient(90deg, rgba(0,0,0,0), rgba(0,0,0,.07));
  pointer-events: none;
}
```
